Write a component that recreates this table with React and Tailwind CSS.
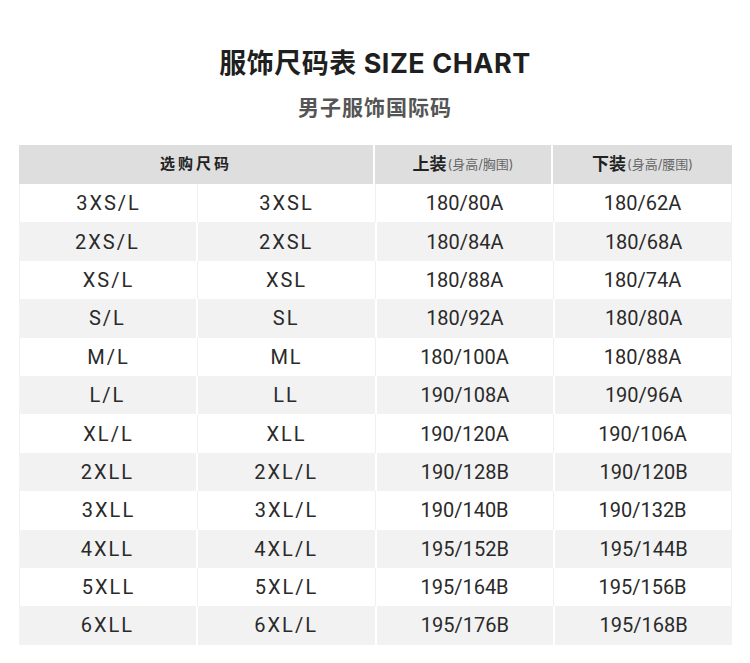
import React from 'react';

const rows = [
  ['3XS/L', '3XSL', '180/80A', '180/62A'],
  ['2XS/L', '2XSL', '180/84A', '180/68A'],
  ['XS/L', 'XSL', '180/88A', '180/74A'],
  ['S/L', 'SL', '180/92A', '180/80A'],
  ['M/L', 'ML', '180/100A', '180/88A'],
  ['L/L', 'LL', '190/108A', '190/96A'],
  ['XL/L', 'XLL', '190/120A', '190/106A'],
  ['2XLL', '2XL/L', '190/128B', '190/120B'],
  ['3XLL', '3XL/L', '190/140B', '190/132B'],
  ['4XLL', '4XL/L', '195/152B', '195/144B'],
  ['5XLL', '5XL/L', '195/164B', '195/156B'],
  ['6XLL', '6XL/L', '195/176B', '195/168B'],
];

const cjk = { fontFamily: 'Inter, "Noto Sans CJK SC", sans-serif' };
const num = { fontFamily: 'Roboto, "Noto Sans", sans-serif' };

const App = () => {
  return (
    <div className="w-[750px] h-[663px] bg-white overflow-hidden" style={cjk}>
      <div className="pt-[46px] text-center">
        <h1 className="text-[27px] leading-[36px] font-bold text-[#1f1f1f] tracking-[0.5px]">服饰尺码表 SIZE CHART</h1>
        <h2 className="mt-[11px] text-[21px] leading-[30px] font-bold text-[#555] tracking-[1px]">男子服饰国际码</h2>
      </div>

      <div className="mx-[19px] mt-[22px] w-[713px]">
        {/* header */}
        <div className="flex h-[39px] bg-[#dedede] text-[#222]">
          <div className="w-[356px] flex items-center justify-center text-[15px] font-bold tracking-[3px] border-r-2 border-white">
            选购尺码
          </div>
          <div className="w-[178px] flex items-center justify-center border-r-2 border-white">
            <span className="text-[17px] font-bold">上装</span>
            <span className="text-[13px] text-[#666] ml-[1px]">(身高/胸围)</span>
          </div>
          <div className="flex-1 flex items-center justify-center">
            <span className="text-[17px] font-bold">下装</span>
            <span className="text-[13px] text-[#666] ml-[1px]">(身高/腰围)</span>
          </div>
        </div>

        {rows.map((r, i) => {
          const gray = i % 2 === 1;
          return (
            <div
              key={i}
              className={gray
                ? 'flex h-[38.4px] bg-[#f2f2f2] text-[20px] text-[#2a2a2a]'
                : 'flex h-[38.4px] bg-white text-[20px] text-[#2a2a2a] border-x border-[#f0f0f0]'}
              style={num}
            >
              {r.map((c, j) => (
                <div
                  key={j}
                  className={
                    (j < 3 ? (gray ? 'border-r-2 border-white ' : 'border-r border-[#f0f0f0] ') : '') +
                    (j < 2 ? 'tracking-[2px] ' : '') +
                    'w-[178px] flex-1 flex items-center justify-center'
                  }
                >
                  {c}
                </div>
              ))}
            </div>
          );
        })}
      </div>
    </div>
  );
};

export default App;
